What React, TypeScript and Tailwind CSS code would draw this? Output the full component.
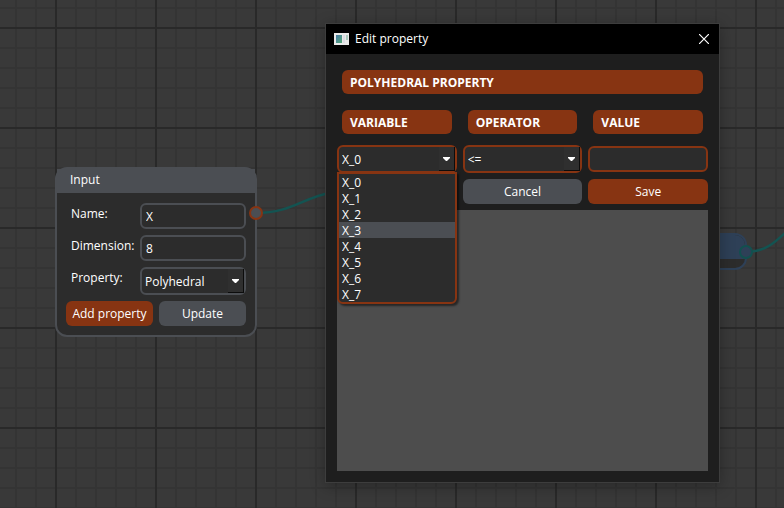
import type { ReactNode } from "react";

const variables = ["X_0", "X_1", "X_2", "X_3", "X_4", "X_5", "X_6", "X_7"];

function ComboBox({ id, label, value, options, tone }: { id: string; label?: string; value: string; options: string[]; tone: string }) {
  return (
    <div className={`relative h-7 min-w-0 rounded-md border-2 bg-[#2c2c2c] ${tone}`}>
      <select
        id={id}
        aria-label={label}
        defaultValue={value}
        className="h-full w-full appearance-none bg-transparent pt-[2px] pr-5 pl-[3px] leading-4 outline-none"
      >
        {options.map((o) => (
          <option key={o}>{o}</option>
        ))}
      </select>
      <span className="pointer-events-none absolute inset-y-0 right-0 flex w-4 items-center justify-center border-r border-b border-[#0c0c0c] bg-[#2f2f2f]">
        <svg width="7" height="4" viewBox="0 0 7 4" fill="#fff">
          <path d="M0 0h7v1L4 4H3L0 1z" />
        </svg>
      </span>
    </div>
  );
}

function Heading({ children }: { children: ReactNode }) {
  return <h2 className="h-6 rounded-md bg-[#873412] px-2 pt-px font-bold leading-6">{children}</h2>;
}

function Wires() {
  return (
    <svg className="absolute inset-0 h-full w-full" fill="none" stroke="#135452" strokeWidth="2.4">
      <path d="M256 213C291 213 302 198 330 193" />
      <path d="M746 252C764 252 774 244 790 228" />
    </svg>
  );
}

function InputNode() {
  const field = "h-[26px] w-full min-w-0 rounded-md border-2 border-[#4b4e53] bg-[#2c2c2c] px-1 pt-px leading-4 outline-none";
  return (
    <section className="absolute top-[167px] left-[55px] w-[202px] rounded-xl border-2 border-[#4b4e53] bg-[#2c2c2c]">
      <h1 className="h-6 bg-[#4b4e53] pl-[13px] leading-[22px]">Input</h1>
      <div className="grid grid-cols-[68px_1fr] gap-x-[6px] gap-y-[6px] px-[9px] pt-[10px] pb-[9px]">
        <label htmlFor="name" className="pt-px pl-[5px] leading-5">Name:</label>
        <input id="name" defaultValue="X" className={field} />
        <label htmlFor="dimension" className="pt-px pl-[5px] leading-5">Dimension:</label>
        <input id="dimension" defaultValue="8" className={field} />
        <label htmlFor="property" className="pt-px pl-[5px] leading-5">Property:</label>
        <ComboBox id="property" value="Polyhedral" options={["Polyhedral"]} tone="border-[#4b4e53]" />
        <div className="col-span-2 grid grid-cols-2 gap-[6px]">
          <button className="h-[25px] rounded-md bg-[#873412] pt-px">Add property</button>
          <button className="h-[25px] rounded-md bg-[#4b4e53] pt-px">Update</button>
        </div>
      </div>
      <span className="absolute top-[37px] -right-[8px] size-[14px] rounded-full border-2 border-[#873412] bg-[#4b4e53]" />
    </section>
  );
}

function OutputNode() {
  return (
    <section className="absolute top-[233px] left-[600px] w-[147px] rounded-xl border-2 border-[#2e4057] bg-[#2c2c2c]">
      <div className="h-6 rounded-t-[10px] bg-[#2e4057]" />
      <div className="h-[9px]" />
      <span className="absolute top-[10px] -right-[8px] size-[14px] rounded-full border-2 border-[#12504f] bg-[#2e4057]" />
    </section>
  );
}

function EditDialog() {
  return (
    <section
      role="dialog"
      aria-label="Edit property"
      className="absolute top-[23px] left-[325px] w-[395px] border border-[#3d3d3d] bg-[#1e1e1e] shadow-[0_3px_14px_rgba(0,0,0,0.3)]"
    >
      <header className="flex h-[30px] items-center bg-black pr-[10px] pl-2">
        <svg width="15" height="12" viewBox="0 0 15 12">
          <defs>
            <linearGradient id="pane" x1="0" y1="0" x2="1" y2="1">
              <stop offset="0" stopColor="#4779a5" />
              <stop offset="1" stopColor="#55a877" />
            </linearGradient>
          </defs>
          <path d="M0 0h15v12H0z" fill="#e9e9e9" />
          <path d="M2 2h6v8H2z" fill="url(#pane)" />
          <path d="M9 2h2v8H9z" fill="#dcdce2" />
          <path d="M12 2h2v5h-2z" fill="#a9c8bd" />
        </svg>
        <span className="ml-[6px] flex-1">Edit property</span>
        <button aria-label="Close">
          <svg width="10" height="10" viewBox="0 0 10 10" stroke="#fff" strokeWidth="1.2">
            <path d="M0 0l10 10M10 0L0 10" />
          </svg>
        </button>
      </header>
      <div className="px-[11px] pt-4 pb-[11px]">
        <div className="px-[5px]">
          <Heading>POLYHEDRAL PROPERTY</Heading>
          <div className="mt-4 grid grid-cols-3 gap-4">
            <Heading>VARIABLE</Heading>
            <Heading>OPERATOR</Heading>
            <Heading>VALUE</Heading>
          </div>
        </div>
        <div className="mt-[11px] grid grid-cols-3 gap-[6px]">
          <div className="relative">
            <ComboBox id="variable" label="Variable" value="X_0" options={variables} tone="border-[#873412]" />
            <ul
              role="listbox"
              aria-label="Variable options"
              className="absolute top-[27px] left-0 z-10 w-full rounded-b-md border-2 border-[#873412] bg-[#2c2c2c] shadow-[2px_2px_2px_rgba(0,0,0,0.5)]"
            >
              {variables.map((v) => (
                <li
                  key={v}
                  role="option"
                  aria-selected={v === "X_3"}
                  className="h-4 pt-px pl-[3px] leading-4 aria-selected:bg-[#4b4e53]"
                >
                  {v}
                </li>
              ))}
            </ul>
          </div>
          <ComboBox id="operator" label="Operator" value="<=" options={["<=", ">="]} tone="border-[#873412]" />
          <input
            aria-label="Value"
            className="my-px h-[26px] w-full min-w-0 rounded-md border-2 border-[#873412] bg-[#2c2c2c] px-1 outline-none"
          />
          <button className="col-start-2 h-[25px] rounded-md bg-[#4b4e53] pt-px">Cancel</button>
          <button className="h-[25px] rounded-md bg-[#873412] pt-px">Save</button>
        </div>
        <div className="mt-[6px] h-[261px] bg-[#4d4d4d]" />
      </div>
    </section>
  );
}

export default function App() {
  return (
    <main className="relative h-screen w-full overflow-hidden bg-[#393939] bg-[linear-gradient(to_right,#292929_2px,transparent_2px),linear-gradient(#292929_2px,transparent_2px),linear-gradient(to_right,#343434_2px,transparent_2px),linear-gradient(#343434_2px,transparent_2px)] bg-size-[100px_100px,100px_100px,20px_20px,20px_20px] bg-position-[55px_27px,55px_27px,15px_7px,15px_7px] font-['Open_Sans','Noto_Sans',sans-serif] text-[12px] leading-4 text-white">
      <Wires />
      <InputNode />
      <OutputNode />
      <EditDialog />
    </main>
  );
}
